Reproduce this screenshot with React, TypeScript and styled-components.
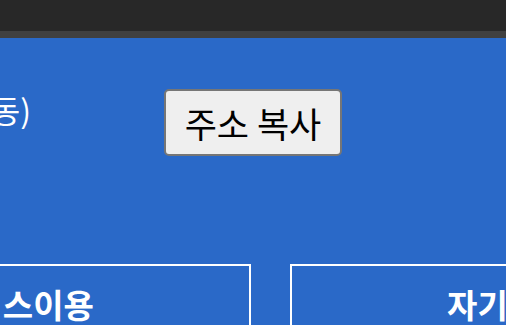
import React from "react";
import styled, { createGlobalStyle } from "styled-components";

const GlobalStyle = createGlobalStyle`
  html, body {
    margin: 0;
    padding: 0;
    background: #2a69c8;
    overflow: hidden;
  }
  body {
    font-family: "Noto Sans CJK KR", "Noto Sans", sans-serif;
  }
`;

const TopBar = styled.div`
  height: 31px;
  background: #282828;
  border-bottom: 7px solid #404040;
`;

const Main = styled.main`
  background: #2a69c8;
  padding-top: 51px;
`;

const InfoRow = styled.div`
  display: flex;
  align-items: flex-start;
`;

const Address = styled.div`
  width: 31px;
  overflow: hidden;
  display: flex;
  justify-content: flex-end;
  white-space: nowrap;
  color: #fff;
  font-size: 32px;
  line-height: 40px;
`;

const CopyButton = styled.button`
  margin-left: 133px;
  width: 178px;
  height: 67px;
  box-sizing: border-box;
  background: #efefef;
  border: 2px solid #767676;
  border-radius: 5px;
  color: #000;
  font-family: "Noto Sans CJK KR", "Noto Sans", sans-serif;
  font-size: 35px;
  padding: 0;
  cursor: pointer;
`;

const Cards = styled.div`
  display: grid;
  grid-template-columns: 466px 466px;
  gap: 39px;
  margin-top: 108px;
  margin-left: -215px;
`;

const Card = styled.section`
  border: 2px solid #fff;
  height: 200px;
  box-sizing: border-box;
  color: #fff;
  text-align: center;
`;

const CardTitle = styled.h2`
  margin: 15px 0 0;
  font-size: 33px;
  font-weight: 700;
  line-height: 46px;
`;

export default function App() {
  return (
    <>
      <GlobalStyle />
      <TopBar />
      <Main>
        <InfoRow>
          <Address>
            <span>서울특별시 강남구 테헤란로 (역삼동)</span>
          </Address>
          <CopyButton type="button">주소 복사</CopyButton>
        </InfoRow>
        <Cards>
          <Card>
            <CardTitle>서비스이용</CardTitle>
          </Card>
          <Card>
            <CardTitle>자기소개서</CardTitle>
          </Card>
        </Cards>
      </Main>
    </>
  );
}
